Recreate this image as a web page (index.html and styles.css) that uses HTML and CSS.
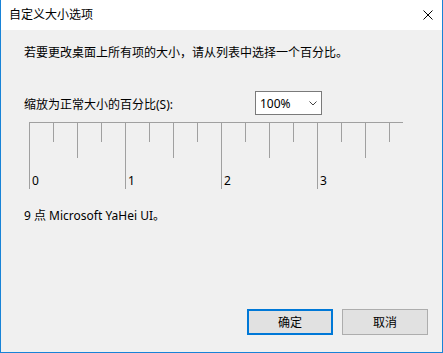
FILE: index.html
```html
<!DOCTYPE html>
<html lang="zh-CN">
<head>
  <meta charset="UTF-8" />
  <title>自定义大小选项</title>
  <link rel="stylesheet" href="styles.css">
</head>
<body>

  <div class="window">
    <div class="titlebar">
      <span class="title">自定义大小选项</span>
      <svg class="close" width="10" height="10" viewBox="0 0 10 10">
        <path d="M0.5 0.5 L9.5 9.5 M9.5 0.5 L0.5 9.5" stroke="#000" stroke-width="1" fill="none" />
      </svg>
    </div>

    <div class="content">
      <p class="intro">若要更改桌面上所有项的大小，请从列表中选择一个百分比。</p>

      <div class="scale-row">
        <label class="scale-label">缩放为正常大小的百分比(S):</label>
        <div class="select">
          <span>100%</span>
          <svg width="8" height="5" viewBox="0 0 8 5">
            <path d="M0.5 0.5 L4 4 L7.5 0.5" stroke="#444" stroke-width="1" fill="none" />
          </svg>
        </div>
      </div>

      <!-- ruler: 24px per minor step, 96px per unit -->
      <svg class="ruler" width="374" height="67" viewBox="0 0 374 67">
        <g stroke="#a0a0a0" stroke-width="1">
          <line x1="0" y1="0.5" x2="374" y2="0.5" />
          <line x1="0.5" y1="0" x2="0.5" y2="67" />
          <line x1="24.5" y1="0" x2="24.5" y2="20" />
          <line x1="48.5" y1="0" x2="48.5" y2="36" />
          <line x1="72.5" y1="0" x2="72.5" y2="20" />
          <line x1="96.5" y1="0" x2="96.5" y2="67" />
          <line x1="120.5" y1="0" x2="120.5" y2="20" />
          <line x1="144.5" y1="0" x2="144.5" y2="36" />
          <line x1="168.5" y1="0" x2="168.5" y2="20" />
          <line x1="192.5" y1="0" x2="192.5" y2="67" />
          <line x1="216.5" y1="0" x2="216.5" y2="20" />
          <line x1="240.5" y1="0" x2="240.5" y2="36" />
          <line x1="264.5" y1="0" x2="264.5" y2="20" />
          <line x1="288.5" y1="0" x2="288.5" y2="67" />
          <line x1="312.5" y1="0" x2="312.5" y2="20" />
          <line x1="336.5" y1="0" x2="336.5" y2="36" />
          <line x1="360.5" y1="0" x2="360.5" y2="20" />
        </g>
        <g class="ruler-nums">
          <text x="3" y="63">0</text>
          <text x="99" y="63">1</text>
          <text x="195" y="63">2</text>
          <text x="291" y="63">3</text>
        </g>
      </svg>

      <p class="font-note">9 点 Microsoft YaHei UI。</p>

      <div class="actions">
        <button class="btn btn-default">确定</button>
        <button class="btn">取消</button>
      </div>
    </div>
  </div>

</body>
</html>
```

FILE: styles.css
```css
body {
  margin: 0;
  font-family: "Noto Sans", "Noto Sans CJK SC", sans-serif;
  font-size: 12px;
  color: #000;
  background: #f0f0f0;
}
.window {
  width: 443px;
  height: 353px;
  box-sizing: border-box;
  border: 1px solid #1883d7;
  border-top: 0;
  display: flex;
  flex-direction: column;
}
.titlebar {
  height: 30px;
  background: #fff;
  display: flex;
  align-items: center;
  justify-content: space-between;
  padding: 0 9px 0 8px;
}
.title {
  line-height: 16px;
}
.content {
  flex: 1;
  display: flex;
  flex-direction: column;
  padding: 0 14px 17px 23px;
  background: #f0f0f0;
}
.intro {
  margin: 15px 0 0;
  line-height: 16px;
}
.scale-row {
  display: flex;
  align-items: center;
  margin-top: 30px;
}
.scale-label {
  width: 231px;
  line-height: 16px;
  padding-top: 3px;
}
.select {
  width: 67px;
  height: 24px;
  box-sizing: border-box;
  border: 1px solid #7a7a7a;
  background: #fff;
  display: flex;
  align-items: center;
  justify-content: space-between;
  padding: 0 4px 0 4px;
}
.select svg {
  margin-top: 1px;
}
.ruler {
  display: block;
  margin: 7px 0 0 5px;
}
.ruler-nums text {
  font-family: "Noto Sans", sans-serif;
  font-size: 12px;
  fill: #000;
}
.font-note {
  margin: 19px 0 0;
  line-height: 16px;
}
.actions {
  margin-top: auto;
  display: flex;
  justify-content: flex-end;
  gap: 9px;
}
.btn {
  width: 86px;
  height: 26px;
  box-sizing: border-box;
  background: #e1e1e1;
  border: 1px solid #adadad;
  font-family: inherit;
  font-size: 12px;
  color: #000;
  padding: 0;
}
.btn-default {
  border: 2px solid #0078d7;
}
```
